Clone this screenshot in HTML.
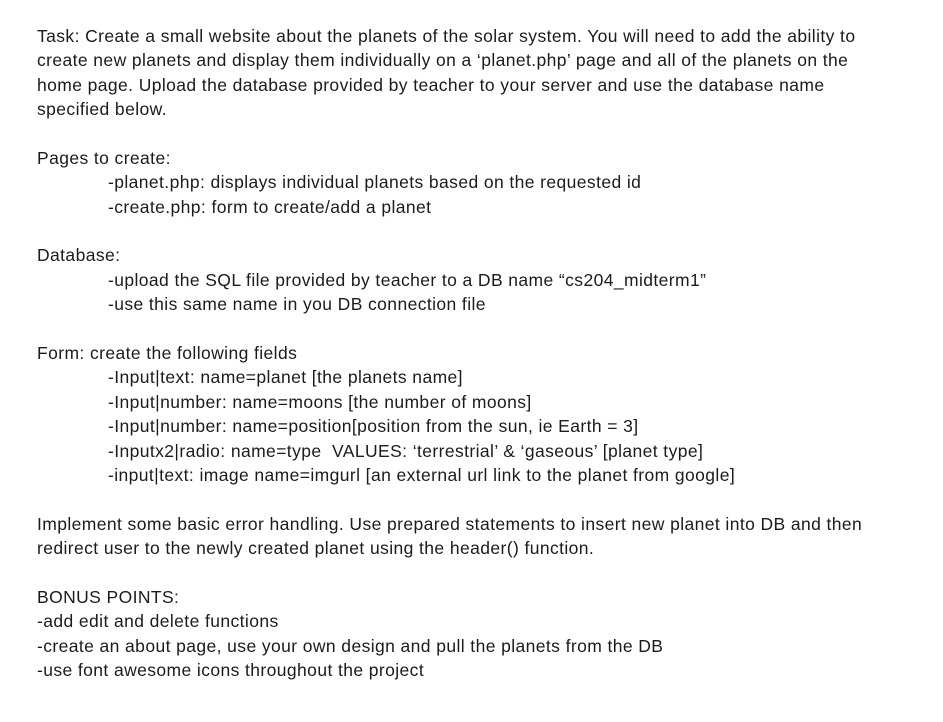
<!DOCTYPE html>
<html><head><meta charset="utf-8"><style>
html,body{margin:0;padding:0;background:#fff;}
body{width:943px;height:722px;position:relative;overflow:hidden;font-family:"Liberation Sans",sans-serif;font-size:17.5px;letter-spacing:0.4px;color:#1b1b1b;}
.l{position:absolute;white-space:nowrap;line-height:20px;}
.a{left:37px}.b{left:108px}
</style></head><body>
<div class="l a" style="top:26px">Task: Create a small website about the planets of the solar system. You will need to add the ability to</div>
<div class="l a" style="top:50px">create new planets and display them individually on a ‘planet.php’ page and all of the planets on the</div>
<div class="l a" style="top:75px">home page. Upload the database provided by teacher to your server and use the database name</div>
<div class="l a" style="top:99px">specified below.</div>
<div class="l a" style="top:148px">Pages to create:</div>
<div class="l b" style="top:172px">-planet.php: displays individual planets based on the requested id</div>
<div class="l b" style="top:197px">-create.php: form to create/add a planet</div>
<div class="l a" style="top:245px">Database:</div>
<div class="l b" style="top:270px">-upload the SQL file provided by teacher to a DB name “cs204_midterm1”</div>
<div class="l b" style="top:294px">-use this same name in you DB connection file</div>
<div class="l a" style="top:343px">Form: create the following fields</div>
<div class="l b" style="top:367px">-Input|text: name=planet [the planets name]</div>
<div class="l b" style="top:392px">-Input|number: name=moons [the number of moons]</div>
<div class="l b" style="top:416px">-Input|number: name=position[position from the sun, ie Earth = 3]</div>
<div class="l b" style="top:441px">-Inputx2|radio: name=type&nbsp; VALUES: ‘terrestrial’ &amp; ‘gaseous’ [planet type]</div>
<div class="l b" style="top:465px">-input|text: image name=imgurl [an external url link to the planet from google]</div>
<div class="l a" style="top:514px">Implement some basic error handling. Use prepared statements to insert new planet into DB and then</div>
<div class="l a" style="top:538px">redirect user to the newly created planet using the header() function.</div>
<div class="l a" style="top:587px">BONUS POINTS:</div>
<div class="l a" style="top:611px">-add edit and delete functions</div>
<div class="l a" style="top:636px">-create an about page, use your own design and pull the planets from the DB</div>
<div class="l a" style="top:660px">-use font awesome icons throughout the project</div>
</body></html>
